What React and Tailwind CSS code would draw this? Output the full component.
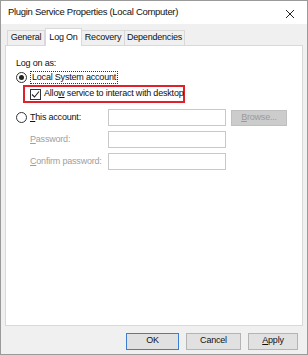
import React from "react";

const font = { fontFamily: '"Liberation Sans", Arial, sans-serif' };

function Radio({ checked }) {
  return (
    <span className="w-[11px] h-[11px] rounded-full border border-[#333] bg-white flex items-center justify-center shrink-0">
      {checked && <span className="w-[5px] h-[5px] rounded-full bg-[#222]"></span>}
    </span>
  );
}

function Input() {
  return <div className="w-[118px] h-[17px] bg-white border border-[#c8c8c8]"></div>;
}

function Button({ children, primary, className = "" }) {
  return (
    <div
      className={`h-[17px] flex items-center justify-center bg-[#e1e1e1] text-[9px] tracking-[-0.2px] text-[#111] border ${
        primary ? "border-[#3c7fd0]" : "border-[#b4b4b4]"
      } ${className}`}
    >
      {children}
    </div>
  );
}

export default function App() {
  return (
    <div
      className="w-[308px] h-[355px] bg-[#f0f0f0] border border-[#9a9a9a] flex flex-col text-[#111]"
      style={font}
    >
      {/* Title bar */}
      <div className="h-[23px] bg-white flex items-center justify-between pl-[7px] pr-[12px] shrink-0">
        <span className="text-[9.5px] tracking-[-0.3px]">Plugin Service Properties (Local Computer)</span>
        <svg width="10" height="10" viewBox="0 0 10 10" className="mt-[2px]">
          <path d="M1 1 L9 9 M9 1 L1 9" stroke="#222" strokeWidth="1" />
        </svg>
      </div>

      {/* Tabs */}
      <div className="flex items-end px-[6px] mt-[3px] h-[18px] shrink-0 text-[9px] tracking-[-0.2px]">
        <div className="w-[38px] h-[15px] flex items-center justify-center border border-b-0 border-[#d9d9d9] bg-[#f0f0f0]">
          General
        </div>
        <div className="w-[37px] h-[18px] flex items-start pt-[2px] justify-center border border-b-0 border-[#d9d9d9] bg-white -mb-[1px] relative z-10">
          Log On
        </div>
        <div className="w-[43px] h-[15px] flex items-center justify-center border border-b-0 border-l-0 border-[#d9d9d9] bg-[#f0f0f0]">
          Recovery
        </div>
        <div className="w-[60px] h-[15px] flex items-center justify-center border border-b-0 border-l-0 border-[#d9d9d9] bg-[#f0f0f0]">
          Dependencies
        </div>
      </div>

      {/* Panel */}
      <div className="flex-1 mx-[4px] bg-white border border-[#d9d9d9] text-[9px] tracking-[-0.2px] px-[10px] pt-[11px]">
        <div className="leading-[12px]">Log on as:</div>

        <div className="flex items-center gap-[3px] mt-[2px]">
          <Radio checked />
          <span className="border border-dotted border-[#333] px-[1px] leading-[11px]">Local System account</span>
        </div>

        <div className="ml-[7px] mt-[1px] w-[162px] h-[18px] border-2 border-[#e0202a] flex items-center pl-[5px] gap-[3px]">
          <span className="w-[11px] h-[11px] border border-[#333] bg-white flex items-center justify-center shrink-0">
            <svg width="9" height="9" viewBox="0 0 9 9">
              <path d="M1 4.5 L3.5 7 L8 1.5" stroke="#222" strokeWidth="1.1" fill="none" />
            </svg>
          </span>
          <span className="whitespace-nowrap">
            Allo<span className="underline">w</span> service to interact with desktop
          </span>
        </div>

        <div className="flex items-center mt-[6px]">
          <div className="w-[92px] flex items-center gap-[3px]">
            <Radio />
            <span>
              <span className="underline">T</span>his account:
            </span>
          </div>
          <Input />
          <div className="ml-[5px] w-[56px] h-[16px] bg-[#cccccc] border border-[#bfbfbf] text-[#9a9a9a] flex items-center justify-center">
            <span>
              <span className="underline">B</span>rowse...
            </span>
          </div>
        </div>

        <div className="flex items-center mt-[5px]">
          <div className="w-[92px] pl-[14px] text-[#a0a0a0]">
            <span className="underline">P</span>assword:
          </div>
          <Input />
        </div>

        <div className="flex items-center mt-[5px]">
          <div className="w-[92px] pl-[14px] text-[#a0a0a0] whitespace-nowrap">
            <span className="underline">C</span>onfirm password:
          </div>
          <Input />
        </div>
      </div>

      {/* Footer */}
      <div className="h-[28px] shrink-0 flex items-center justify-end pr-[9px] pt-[2px]">
        <Button primary className="w-[53px]">OK</Button>
        <Button className="w-[55px] ml-[7px]">Cancel</Button>
        <Button className="w-[50px] ml-[7px]">
          <span>
            <span className="underline">A</span>pply
          </span>
        </Button>
      </div>
    </div>
  );
}
